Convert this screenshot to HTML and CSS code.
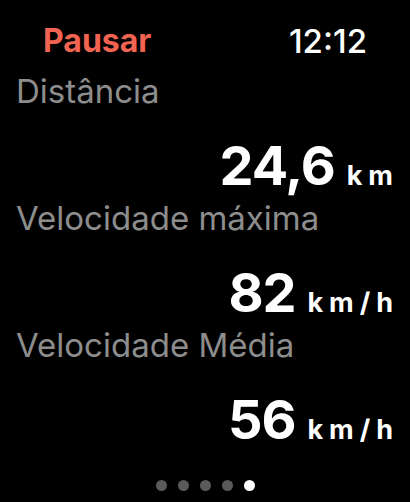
FILE: index.html
```html
<!DOCTYPE html>
<html lang="pt">
<head>
  <meta charset="UTF-8" />
  <meta name="viewport" content="width=device-width, initial-scale=1.0"/>
  <title>Treino</title>
  <link rel="stylesheet" href="styles.css">
</head>
<body>
  <header class="top">
    <span class="pause">Pausar</span>
    <span class="clock">12:12</span>
  </header>
  <main class="metrics">
    <div class="metric">
      <div class="label">Distância</div>
      <div class="value">24,6 <span class="unit">km</span></div>
    </div>
    <div class="metric">
      <div class="label">Velocidade máxima</div>
      <div class="value">82 <span class="unit">km/h</span></div>
    </div>
    <div class="metric">
      <div class="label">Velocidade Média</div>
      <div class="value">56 <span class="unit">km/h</span></div>
    </div>
  </main>
  <nav class="dots">
    <span class="dot"></span>
    <span class="dot"></span>
    <span class="dot"></span>
    <span class="dot"></span>
    <span class="dot active"></span>
  </nav>
</body>
</html>
```

FILE: styles.css
```css
body { margin: 0; background: #000; color: #fff; font-family: Inter, "Liberation Sans", sans-serif; width: 410px; height: 502px; overflow: hidden; }
.top { display: flex; justify-content: space-between; padding: 22px 43px 0 43px; line-height: 38px; font-size: 32px; }
.pause { color: #f26451; font-weight: 700; }
.clock { font-weight: 500; font-size: 33px; }
.metrics { display: flex; flex-direction: column; gap: 2px; margin-top: 11px; padding: 0 17px 0 16px; }
.label { color: #8d8d8d; font-size: 33px; line-height: 40px; }
.value { text-align: right; font-size: 54px; font-weight: 700; line-height: 60px; letter-spacing: -1px; margin-top: 25px; }
.unit { font-size: 27px; line-height: 1; letter-spacing: 6px; margin-right: -6px; }
.dots { display: flex; justify-content: center; gap: 11px; margin-top: 30px; }
.dot { width: 11px; height: 11px; border-radius: 50%; background: #5a5a5a; }
.dot.active { background: #fff; }
```
